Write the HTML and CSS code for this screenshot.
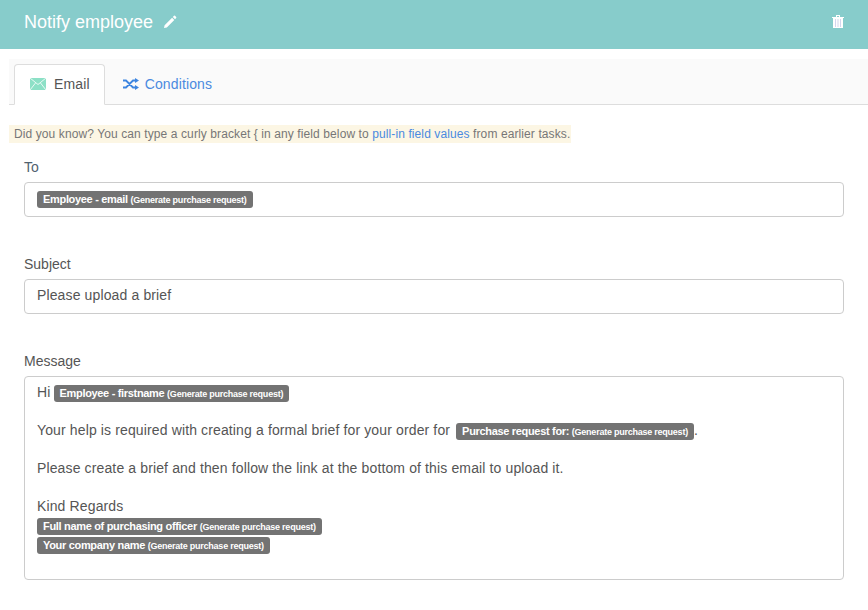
FILE: index.html
```html
<!DOCTYPE html>
<html lang="en">
<head>
    <meta charset="UTF-8">
    <title>Notify employee</title>
    <link rel="stylesheet" href="styles.css">
</head>
<body>
    <header class="task-header">
        <div class="task-title">
            <span>Notify employee</span>
            <svg class="icon-pencil" width="14" height="14" viewBox="0 0 14 14"><path d="M1 13l0.600-2.800 7.500-7.500 2.200 2.200-7.500 7.500zM9.800 2l1.200-1.200q0.500-0.400 1 0l1.200 1.200q0.400 0.500 0 1l-1.200 1.200z" fill="#fff"/></svg>
        </div>
        <svg class="icon-trash" width="12" height="13" viewBox="0 0 12 13"><path d="M0 2h12v1H0zM4 0h4v2H7V1H5v1H4z" fill="#fff"/><path d="M1 3h10v10H1z" fill="#fff"/><path d="M3 4h1v8H3zM5.500 4h1v8h-1zM8 4h1v8H8z" fill="#d5d5ee"/></svg>
    </header>

    <nav class="tabs">
        <div class="tab active">
            <svg width="16" height="12" viewBox="0 0 16 12"><path d="M0 0h16v12H0z" fill="#8ce0c6"/><path d="M0 0l8 6.500 8-6.500M0 12l5.500-7M16 12l-5.500-7" fill="none" stroke="#fff" stroke-width="0.8"/></svg>
            <span>Email</span>
        </div>
        <div class="tab tab-conditions">
            <svg width="16" height="12" viewBox="0 0 16 12"><path d="M0 2.500h3l7 7h2.500M0 9.500h3l7-7h2.500" fill="none" stroke="#3d85e0" stroke-width="1.800"/><path d="M12 0l4 2.500-4 2.500zM12 7l4 2.500-4 2.500z" fill="#3d85e0"/></svg>
            <span>Conditions</span>
        </div>
    </nav>

    <p class="hint">Did you know? You can type a curly bracket { in any field below to <a href="#">pull-in field values</a> from earlier tasks.</p>

    <form class="email-form">
        <div class="form-group">
            <label class="label-to">To</label>
            <div class="field"><span class="tag">Employee - email <small>(Generate purchase request)</small></span></div>
        </div>
        <div class="form-group">
            <label>Subject</label>
            <div class="field field-text">Please upload a brief</div>
        </div>
        <div class="form-group">
            <label>Message</label>
            <div class="field message">
                <div class="line">Hi <span class="tag tag-hi">Employee - firstname <small>(Generate purchase request)</small></span></div>
                <div class="line gap">Your help is required with creating a formal brief for your order for <span class="tag tag-order">Purchase request for: <small>(Generate purchase request)</small></span>.</div>
                <div class="line gap">Please create a brief and then follow the link at the bottom of this email to upload it.</div>
                <div class="line gap">Kind Regards</div>
                <div class="tag-row"><span class="tag">Full name of purchasing officer <small>(Generate purchase request)</small></span></div>
                <div class="tag-row"><span class="tag">Your company name <small>(Generate purchase request)</small></span></div>
            </div>
        </div>
    </form>
</body>
</html>
```
FILE: styles.css
```css
* {
    box-sizing: border-box;
    margin: 0;
    padding: 0;
}

html, body {
    height: 610px;
    overflow: hidden;
}

body {
    font-family: "Liberation Sans", Arial, sans-serif;
    font-size: 14px;
    line-height: 20px;
    letter-spacing: 0.13px;
    color: #555;
    background-color: #fff;
}

.task-header {
    height: 49px;
    padding: 0 24px 6px;
    background-color: #87cccb;
    display: flex;
    justify-content: space-between;
    align-items: center;
}

.task-title {
    display: flex;
    align-items: center;
    gap: 10px;
    font-size: 18px;
    letter-spacing: 0;
    color: #fff;
}

.tabs {
    margin: 10px 0 0 9px;
    height: 46px;
    padding: 5px 0 0 5px;
    background-color: #fafafa;
    border-bottom: 1px solid #ddd;
    display: flex;
}

.tab {
    height: 41px;
    padding: 0 15px 2px;
    display: flex;
    align-items: center;
    gap: 8px;
    color: #4a8ae0;
    border: 1px solid transparent;
}

.tab.active {
    padding-right: 14px;
    color: #555;
    background-color: #fff;
    border-color: #ddd;
    border-bottom-color: #fff;
    border-radius: 4px 4px 0 0;
}

.tab-conditions {
    padding-left: 17px;
    gap: 6px;
}

.hint {
    margin: 20px 297px 0 9px;
    padding: 0 5px;
    height: 18px;
    line-height: 18px;
    font-size: 12px;
    letter-spacing: 0.1px;
    white-space: nowrap;
    background-color: #fcf6e4;
    color: #777;
}

.hint a {
    color: #4a8ae0;
    text-decoration: none;
}

.email-form {
    padding: 14px 24px 0;
}

.form-group {
    margin-bottom: 37px;
}

label {
    display: block;
    height: 20px;
    margin-bottom: 5px;
    letter-spacing: 0;
}

.label-to {
    color: #50626f;
}

.field {
    height: 35px;
    padding: 6px 12px;
    border: 1px solid #ccc;
    border-radius: 4px;
}

.field-text {
    padding-top: 5px;
}

.field.message {
    height: 204px;
    padding: 5px 12px;
}

.line.gap {
    margin-top: 18px;
}

.tag {
    display: inline-block;
    height: 17px;
    padding: 0 6px;
    line-height: 16px;
    font-size: 11px;
    font-weight: bold;
    letter-spacing: -0.32px;
    color: #fff;
    background-color: #737373;
    border-radius: 3px;
    vertical-align: 1px;
}

.tag small {
    font-size: 9px;
    letter-spacing: -0.24px;
}

.message .tag {
    vertical-align: 0;
}

.tag-hi {
    margin-left: -1px;
}

.tag-order {
    margin-left: 2px;
}

.tag-row {
    height: 19px;
    line-height: 19px;
}
```
